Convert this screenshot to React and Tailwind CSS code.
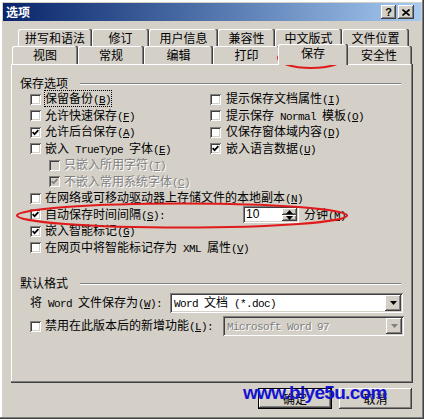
import clsx from 'clsx';

const RAISED = 'shadow-[inset_-1px_-1px_0_#404040,inset_1px_1px_0_#fff,inset_-2px_-2px_0_#808080]';
const SUNKEN = 'shadow-[inset_1px_1px_0_#808080,inset_-1px_-1px_0_#fff,inset_2px_2px_0_#404040,inset_-2px_-2px_0_#d4d0c8]';
const GRAY_TEXT = 'text-[#808080] [text-shadow:1px_1px_0_#fff]';

function M({ children }) {
  return <span className="[font-family:'Liberation_Mono',monospace] text-[11px] tracking-[-0.6px]">{children}</span>;
}

function K({ k }) {
  return <M>(<u>{k}</u>)</M>;
}

function Box({ checked, disabled }) {
  return (
    <span className={clsx('relative inline-block w-[11px] h-[11px] shrink-0', SUNKEN, disabled ? 'bg-[#d4d0c8]' : 'bg-white')}>
      {checked && (
        <svg className="absolute left-[2px] top-[2px]" width="7" height="7" viewBox="0 0 7 7">
          <path d="M0.6 3.2 L2.6 5.2 L6.4 1.2" fill="none" stroke={disabled ? '#808080' : '#000'} strokeWidth="1.7" />
        </svg>
      )}
    </span>
  );
}

function Check({ checked, disabled, focus, children, gap = 'ml-[4px]' }) {
  return (
    <div className="flex items-center h-[16.5px]">
      <Box checked={checked} disabled={disabled} />
      <span className={clsx('relative whitespace-nowrap', gap, disabled && GRAY_TEXT)}>
        {children}
        {focus && <span className="absolute -left-[1px] -right-[1px] top-[0px] bottom-[1px] border border-dotted border-black" />}
      </span>
    </div>
  );
}

function Group({ label }) {
  return (
    <div className="flex items-center h-[16px]">
      <span>{label}</span>
      <div className="flex-1 ml-[12px] mr-[3px] mt-[2px] h-[2px] border-t border-[#808080] border-b border-b-white" />
    </div>
  );
}

function Arrow({ up, gray }) {
  return (
    <svg width="7" height="4" viewBox="0 0 7 4">
      <polygon points={up ? '3.5,0 7,4 0,4' : '0,0 7,0 3.5,4'} fill={gray ? '#808080' : '#000'} />
    </svg>
  );
}

function Combo({ w, disabled, children }) {
  return (
    <div className={clsx('flex h-[20px] p-[2px]', w, SUNKEN, disabled ? 'bg-[#d4d0c8]' : 'bg-white')}>
      <div className={clsx('flex-1 flex items-center pl-[2px] whitespace-nowrap', disabled && GRAY_TEXT)}>
        <span className="whitespace-pre">{children}</span>
      </div>
      <div className={clsx('w-[16px] h-[16px] bg-[#d4d0c8] flex items-center justify-center', RAISED)}>
        <Arrow gray={disabled} />
      </div>
    </div>
  );
}

function Tab({ w, label, selected }) {
  return (
    <div
      className={clsx(
        'flex items-center justify-center bg-[#d4d0c8] rounded-t-[2px] shadow-[inset_-1px_0_0_#404040,inset_-2px_0_0_#808080,inset_1px_1px_0_#fff]',
        w,
        selected ? 'relative z-10 -mx-[2px] -mt-[2px] h-[21px] pb-[3px]' : 'h-full'
      )}
    >
      {label}
    </div>
  );
}

export default function App() {
  return (
    <div className="relative w-[424px] h-[419px] overflow-hidden bg-[#d4d0c8] p-[3px] text-[12px] leading-[16px] text-black [font-family:'Noto_Sans_CJK_SC','Noto_Sans_CJK_TC',sans-serif] shadow-[inset_-1px_-1px_0_#404040,inset_-2px_-2px_0_#808080,inset_2px_2px_0_#fff]">
      {/* title bar */}
      <div className="flex items-center h-[18px] pl-[3px] pr-[7px] bg-linear-to-r from-[#0a246a] to-[#a6caf0]">
        <span className="font-bold text-white">选项</span>
        <div className="ml-auto flex gap-[2px]">
          <div className={clsx('w-[15px] h-[14px] bg-[#d4d0c8] flex items-center justify-center text-[11px] font-bold leading-none [font-family:\'Liberation_Sans\',sans-serif]', RAISED)}>?</div>
          <div className={clsx('w-[16px] h-[14px] bg-[#d4d0c8] flex items-center justify-center', RAISED)}>
            <svg width="8" height="7" viewBox="0 0 8 7">
              <path d="M0.5 0.5 L7.5 6.5 M7.5 0.5 L0.5 6.5" stroke="#000" strokeWidth="1.6" />
            </svg>
          </div>
        </div>
      </div>

      <div className="px-[8px] pt-[8px]">
        {/* tabs */}
        <div className="flex h-[17px] ml-[7px]">
          <Tab w="w-[74px]" label="拼写和语法" />
          <Tab w="w-[57px]" label="修订" />
          <Tab w="w-[69px]" label="用户信息" />
          <Tab w="w-[57px]" label="兼容性" />
          <Tab w="w-[67px]" label="中文版式" />
          <Tab w="w-[67px]" label="文件位置" />
        </div>
        <div className="flex h-[18px] ml-[1px]">
          <Tab w="w-[66px]" label="视图" />
          <Tab w="w-[66px]" label="常规" />
          <Tab w="w-[69px]" label="编辑" />
          <Tab w="w-[67px]" label="打印" />
          <Tab w="w-[70px]" label="保存" selected />
          <Tab w="w-[66px]" label="安全性" />
        </div>

        {/* panel */}
        <div className="h-[319px] pt-[11px] px-[9px] shadow-[inset_-1px_-1px_0_#404040,inset_-2px_-2px_0_#808080,inset_1px_1px_0_#fff]">
          <Group label="保存选项" />
          <div className="pl-[10px]">
            <div className="grid grid-cols-[180px_1fr]">
              <div>
                <Check focus>保留备份<K k="B" /></Check>
                <Check>允许快速保存<K k="F" /></Check>
                <Check checked>允许后台保存<K k="A" /></Check>
                <Check>嵌入<M> TrueType </M>字体<K k="E" /></Check>
              </div>
              <div>
                <Check gap="ml-[5px]">提示保存文档属性<K k="I" /></Check>
                <Check gap="ml-[5px]">提示保存<M> Normal </M>模板<K k="O" /></Check>
                <Check gap="ml-[5px]">仅保存窗体域内容<K k="D" /></Check>
                <Check gap="ml-[5px]" checked>嵌入语言数据<K k="U" /></Check>
              </div>
            </div>
            <div className="pl-[19px]">
              <Check disabled>只嵌入所用字符<K k="T" /></Check>
              <Check disabled checked>不嵌入常用系统字体<K k="C" /></Check>
            </div>
            <Check>在网络或可移动驱动器上存储文件的本地副本<K k="N" /></Check>
            <div className="flex items-center h-[16.5px]">
              <Box checked />
              <span className="ml-[4px] w-[198px] whitespace-nowrap">
                自动保存时间间隔<K k="S" /><M>:</M>
              </span>
              <div className={clsx('flex w-[56px] h-[17px] bg-white p-[2px]', SUNKEN)}>
                <span className="flex-1 pl-[1px] text-[12px] leading-[13px] [font-family:'Liberation_Sans',sans-serif]">10</span>
                <div className="flex flex-col w-[15px]">
                  <div className={clsx('flex-1 bg-[#d4d0c8] flex items-center justify-center', RAISED)}>
                    <Arrow up />
                  </div>
                  <div className={clsx('flex-1 bg-[#d4d0c8] flex items-center justify-center', RAISED)}>
                    <Arrow />
                  </div>
                </div>
              </div>
              <span className="ml-[5px] whitespace-nowrap">分钟<K k="M" /></span>
            </div>
            <Check checked>嵌入智能标记<K k="G" /></Check>
            <Check>在网页中将智能标记存为<M> XML </M>属性<K k="V" /></Check>
          </div>

          <div className="mt-[19px]">
            <Group label="默认格式" />
          </div>
          <div className="pl-[10px]">
            <div className="flex items-center h-[20px] mt-[2px]">
              <span className="w-[140px] whitespace-nowrap">将<M> Word </M>文件保存为<K k="W" /><M>:</M></span>
              <Combo w="w-[233px]">
                <M>Word </M>文档<M> (*.doc)</M>
              </Combo>
            </div>
            <div className="flex items-center h-[20px] mt-[3px]">
              <Box />
              <span className="ml-[4px] w-[183px] whitespace-nowrap">禁用在此版本后的新增功能<K k="L" /><M>:</M></span>
              <Combo w="w-[186px]" disabled>
                <M>Microsoft Word 97</M>
              </Combo>
            </div>
          </div>
        </div>

        {/* buttons */}
        <div className="flex justify-end gap-[7px] mt-[5px] pr-[1px]">
          <div className="w-[74px] h-[21px] border border-black">
            <div className={clsx('w-full h-full flex items-center justify-center', RAISED)}>确定</div>
          </div>
          <div className={clsx('w-[73px] h-[21px] flex items-center justify-center', RAISED)}>取消</div>
        </div>
      </div>

      {/* red hand-drawn marks */}
      <svg className="absolute inset-0 pointer-events-none" width="424" height="419" viewBox="0 0 424 419">
        <ellipse cx="311" cy="58" rx="33" ry="10" fill="none" stroke="#e01a1a" strokeWidth="2" />
        <ellipse cx="182" cy="215.5" rx="165" ry="12" fill="none" stroke="#e01a1a" strokeWidth="2.2" />
      </svg>

      {/* watermark */}
      <div className="absolute left-[243px] top-[383px] text-[19px] leading-none font-bold tracking-[-0.7px] text-[#1414d0] [font-family:'Liberation_Sans',sans-serif]">
        www.biye5u.com
      </div>
    </div>
  );
}
